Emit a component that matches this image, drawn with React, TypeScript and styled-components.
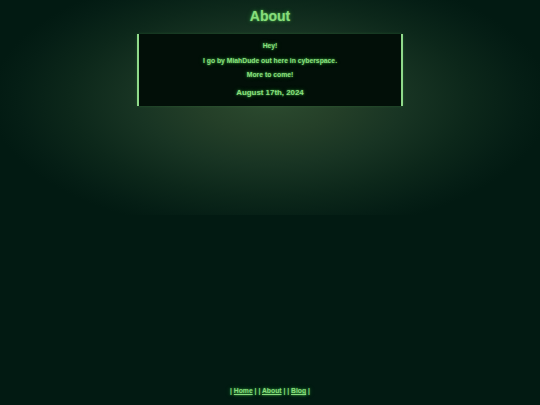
import React from "react";
import styled, { createGlobalStyle } from "styled-components";

const Global = createGlobalStyle`
  html, body {
    margin: 0;
    padding: 0;
    height: 100%;
  }
  body {
    background-color: #021a12;
    background-image:
      radial-gradient(ellipse 280px 135px at 270px 100px,
        #2c4b2f 0%,
        #243f28 25%,
        #183423 48%,
        #0c271a 72%,
        #051e15 90%,
        #021a12 100%);
    background-size: 100% 215px;
    background-repeat: no-repeat;
    font-family: "Liberation Sans", Arial, sans-serif;
    color: #88dc7c;
  }
  #root { min-height: 100vh; }
`;

const Page = styled.div`
  min-height: 100vh;
  display: flex;
  flex-direction: column;
  align-items: center;
  box-sizing: border-box;
  padding-top: 7px;
  padding-bottom: 9px;
`;

const glow = `text-shadow: 0 0 2px rgba(90, 220, 90, 0.8), 0 0 5px rgba(60, 180, 60, 0.45);`;

const Title = styled.h1`
  margin: 0 0 9px;
  font-size: 14px;
  line-height: 18px;
  font-weight: 700;
  color: #88dc7c;
  ${glow}
`;

const Card = styled.section`
  width: 262px;
  background: #020f08;
  border-left: 2px solid #8fd98a;
  border-right: 2px solid #8fd98a;
  box-shadow: 0 0 3px rgba(80, 180, 80, 0.25);
  display: flex;
  flex-direction: column;
  align-items: center;
  padding: 8px 0 8px;
  box-sizing: content-box;
`;

const Line = styled.p`
  margin: 0 0 6.5px;
  font-size: 6.8px;
  line-height: 8px;
  font-weight: 700;
  color: #88dc7c;
  ${glow}
`;

const DateLine = styled.h3`
  margin: 2px 0 0;
  font-size: 7.9px;
  line-height: 10px;
  font-weight: 700;
  color: #88dc7c;
  ${glow}
`;

const Footer = styled.footer`
  margin-top: auto;
  font-size: 6.8px;
  line-height: 10px;
  font-weight: 700;
  color: #88dc7c;
  ${glow}
`;

const NavLink = styled.a`
  color: #88dc7c;
  text-decoration: underline;
`;

const links = ["Home", "About", "Blog"];

export default function App() {
  return (
    <>
      <Global />
      <Page>
        <Title>About</Title>
        <Card>
          <Line>Hey!</Line>
          <Line>I go by MiahDude out here in cyberspace.</Line>
          <Line>More to come!</Line>
          <DateLine>August 17th, 2024</DateLine>
        </Card>
        <Footer>
          {links.map((l, i) => (
            <React.Fragment key={l}>
              {i > 0 ? " " : ""}| <NavLink href="#">{l}</NavLink> |
            </React.Fragment>
          ))}
        </Footer>
      </Page>
    </>
  );
}
